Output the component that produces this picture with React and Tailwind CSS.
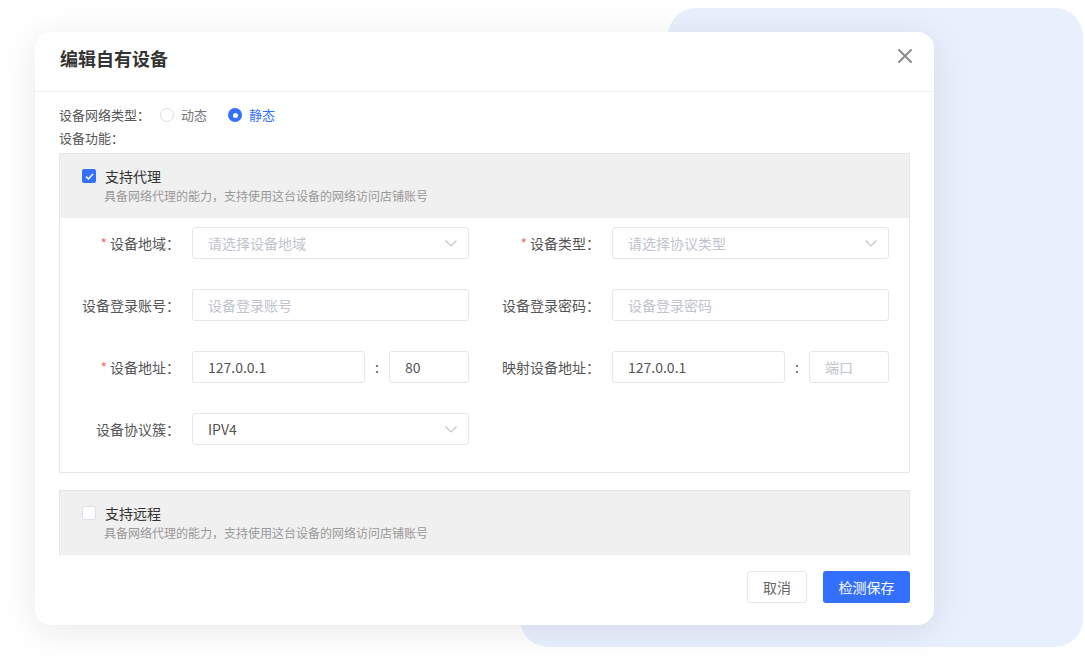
import { useState } from "react";

const FONT = { fontFamily: '"Noto Sans CJK SC", "Noto Sans", sans-serif' };

function Chevron() {
  return (
    <svg width="12" height="7" viewBox="0 0 12 7" fill="none">
      <polyline points="0.5,0.5 6,6 11.5,0.5" stroke="#c4c4c4" strokeWidth="1.1" />
    </svg>
  );
}

function CloseIcon() {
  return (
    <svg width="14" height="14" viewBox="0 0 14 14" fill="none">
      <path d="M1 1L13 13M13 1L1 13" stroke="#8c8c8c" strokeWidth="2" strokeLinecap="round" />
    </svg>
  );
}

function Checkbox({ checked }) {
  if (checked) {
    return (
      <span className="flex h-[14px] w-[14px] shrink-0 items-center justify-center rounded-[2px] bg-[#3370ff]">
        <svg width="9" height="7" viewBox="0 0 9 7" fill="none">
          <polyline points="1,3.6 3.4,6 8,1" stroke="#fff" strokeWidth="1.4" />
        </svg>
      </span>
    );
  }
  return <span className="h-[14px] w-[14px] shrink-0 rounded-[2px] border border-[#dcdfe6] bg-white" />;
}

function Radio({ checked, label, onClick }) {
  return (
    <button type="button" onClick={onClick} className="flex items-center gap-[7px]">
      {checked ? (
        <span className="flex h-[14px] w-[14px] items-center justify-center rounded-full bg-[#3370ff]">
          <span className="h-[5px] w-[5px] rounded-full bg-white" />
        </span>
      ) : (
        <span className="h-[14px] w-[14px] rounded-full border border-[#dcdfe6] bg-white" />
      )}
      <span className={checked ? "text-[13px] text-[#3370ff]" : "text-[13px] text-[#777]"}>{label}</span>
    </button>
  );
}

function Label({ required, children }) {
  return (
    <div className="w-[120px] shrink-0 text-right text-[14px] text-[#555]">
      {required && <span className="mr-[3px] text-[#f56c6c]">*</span>}
      {children}：
    </div>
  );
}

function Field({ value, placeholder, select, className = "w-[277px]" }) {
  return (
    <div
      className={`flex h-[32px] items-center justify-between rounded-[3px] border border-[#e4e6eb] bg-white pl-[15px] pr-[11px] text-[14px] ${className}`}
    >
      <span className={value ? "text-[#555]" : "text-[#c0c4cc]"}>{value || placeholder}</span>
      {select && <Chevron />}
    </div>
  );
}

function SectionHead({ checked, title }) {
  return (
    <div className="bg-[#f0f0f0] pt-[13px] pb-[14px] pl-[22px]">
      <div className="flex h-[18px] items-center gap-[9px]">
        <Checkbox checked={checked} />
        <span className="text-[14px] text-[#333]">{title}</span>
      </div>
      <div className="mt-[3px] pl-[22px] text-[12px] leading-[16px] text-[#999]">
        具备网络代理的能力，支持使用这台设备的网络访问店铺账号
      </div>
    </div>
  );
}

function AddressRow({ label, required, value, port }) {
  return (
    <div className="flex items-center">
      <Label required={required}>{label}</Label>
      <div className="ml-[12px] flex items-center">
        <Field value={value} className="w-[173px]" />
        <span className="w-[24px] text-center text-[14px] text-[#555]">:</span>
        <Field value={port} placeholder="端口" className="w-[80px]" />
      </div>
    </div>
  );
}

function FormItem({ label, required, children }) {
  return (
    <div className="flex items-center">
      <Label required={required}>{label}</Label>
      <div className="ml-[12px]">{children}</div>
    </div>
  );
}

export default function App() {
  const [netType, setNetType] = useState("static");

  return (
    <div className="relative h-[663px] w-full overflow-hidden bg-white pl-[35px] pt-[32px]" style={FONT}>
      {/* light blue backdrop cards */}
      <div className="absolute left-[668px] right-[2px] top-[8px] bottom-[16px] rounded-[28px] bg-[#e8effd]" />
      <div className="absolute left-[520px] top-[420px] w-[300px] bottom-[16px] rounded-[28px] bg-[#e8effd]" />

      <div className="relative flex h-[593px] w-[899px] flex-col rounded-[16px] bg-white shadow-[0_6px_36px_rgba(0,0,0,0.09)]">
        <div className="flex h-[60px] shrink-0 items-start justify-between border-b border-[#f2f2f2] pl-[25px] pr-[22px]">
          <h1 className="mt-[13px] text-[18px] leading-[27px] font-bold text-[#333]">编辑自有设备</h1>
          <button type="button" className="mt-[17px]">
            <CloseIcon />
          </button>
        </div>

        <div className="h-[463px] shrink-0 overflow-hidden px-6 pt-[13px]">
          <div className="flex h-[20px] items-center gap-[12px] text-[13px] text-[#555]">
            <span>设备网络类型：</span>
            <div className="-ml-[2px] flex items-center gap-[21px]">
              <Radio checked={netType === "dynamic"} label="动态" onClick={() => setNetType("dynamic")} />
              <Radio checked={netType === "static"} label="静态" onClick={() => setNetType("static")} />
            </div>
          </div>
          <div className="mt-[3px] h-[20px] text-[13px] leading-[20px] text-[#555]">设备功能：</div>

          <div className="mt-[5px] border border-[#e6e6e6]">
            <SectionHead checked title="支持代理" />
            <div className="grid grid-cols-[409px_409px] gap-x-[11px] gap-y-[30px] pt-[9px] pb-[27px]">
              <FormItem label="设备地域" required>
                <Field placeholder="请选择设备地域" select />
              </FormItem>
              <FormItem label="设备类型" required>
                <Field placeholder="请选择协议类型" select />
              </FormItem>
              <FormItem label="设备登录账号">
                <Field placeholder="设备登录账号" />
              </FormItem>
              <FormItem label="设备登录密码">
                <Field placeholder="设备登录密码" />
              </FormItem>
              <AddressRow label="设备地址" required value="127.0.0.1" port="80" />
              <AddressRow label="映射设备地址" value="127.0.0.1" />
              <FormItem label="设备协议簇">
                <Field value="IPV4" select />
              </FormItem>
            </div>
          </div>

          <div className="mt-[17px] border border-[#e6e6e6]">
            <SectionHead title="支持远程" />
            <div className="h-[120px]" />
          </div>
        </div>

        <div className="flex justify-end gap-[16px] px-6 pt-[16px]">
          <button
            type="button"
            className="h-[32px] w-[60px] rounded-[3px] border border-[#e4e6eb] bg-white text-[14px] text-[#666]"
          >
            取消
          </button>
          <button type="button" className="h-[32px] w-[87px] rounded-[3px] bg-[#3370ff] text-[14px] text-white">
            检测保存
          </button>
        </div>
      </div>
    </div>
  );
}
